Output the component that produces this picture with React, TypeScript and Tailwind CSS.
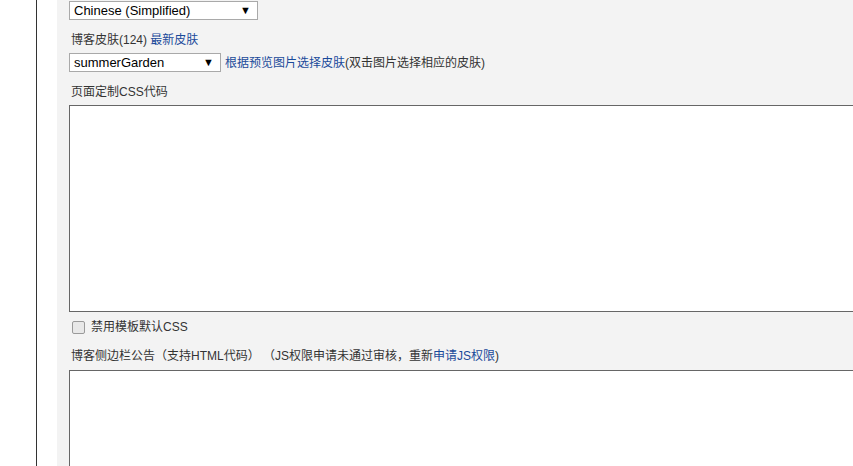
import React from "react";

const font = { fontFamily: '"Liberation Sans", "Noto Sans CJK SC", sans-serif' };

function FakeSelect({ text, width }: { text: string; width: string }) {
  return (
    <div
      className={`${width} h-[18px] bg-white border border-[#a9a9a9] flex items-center justify-between pl-[4px] pr-[6px] text-[13px] text-black leading-none shrink-0`}
    >
      <span>{text}</span>
      <span className="text-[11px]">▼</span>
    </div>
  );
}

export default function App() {
  return (
    <div className="w-[853px] h-[466px] overflow-hidden flex bg-white" style={font}>
      <div className="w-[37px] shrink-0 border-r border-[#333]" />
      <div className="w-[20px] shrink-0" />
      <div className="flex-1 bg-[#f3f3f3] overflow-hidden pl-[12px] flex flex-col text-[12px] text-[#333]">
        <div className="pt-[1px]">
          <FakeSelect text="Chinese (Simplified)" width="w-[189px] h-[19px]" />
        </div>
        <div className="mt-[12px] h-[16px] leading-[16px] pl-[2px] whitespace-nowrap">
          博客皮肤(124) <span className="text-[#1a4a9a]">最新皮肤</span>
        </div>
        <div className="mt-[5px] flex items-center h-[19px]">
          <FakeSelect text="summerGarden" width="w-[152px] h-[19px]" />
          <span className="ml-[4px] whitespace-nowrap leading-[16px]">
            <span className="text-[#1a4a9a]">根据预览图片选择皮肤</span>(双击图片选择相应的皮肤)
          </span>
        </div>
        <div className="mt-[12px] h-[16px] leading-[16px] pl-[2px] whitespace-nowrap">页面定制CSS代码</div>
        <div className="mt-[5px] w-[800px] h-[207px] shrink-0 bg-white border border-[#666]" />
        <div className="mt-[7px] h-[16px] flex items-center whitespace-nowrap">
          <div className="ml-[3px] w-[13px] h-[13px] rounded-[2px] border border-[#9a9a9a] bg-[#e8e8e8]" />
          <span className="ml-[6px] leading-[16px]">禁用模板默认CSS</span>
        </div>
        <div className="mt-[13px] h-[16px] leading-[16px] pl-[2px] whitespace-nowrap">
          博客侧边栏公告（支持HTML代码） （JS权限申请未通过审核，重新
          <span className="text-[#1a4a9a]">申请JS权限</span>)
        </div>
        <div className="mt-[6px] w-[800px] h-[200px] shrink-0 bg-white border border-[#666]" />
      </div>
    </div>
  );
}
